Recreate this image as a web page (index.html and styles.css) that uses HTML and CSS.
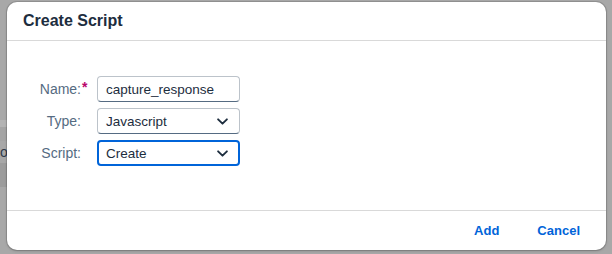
FILE: index.html
```html
<!DOCTYPE html>
<html lang="en">
<head>
    <meta charset="UTF-8">
    <title>Create Script</title>
    <link rel="stylesheet" href="styles.css">
</head>
<body>
    <div class="backdrop">
        <div class="band band-light"></div>
        <div class="band band-mid"></div>
        <div class="band-text">ot</div>
        <div class="band band-dark"></div>
    </div>

    <div class="dialog">
        <div class="dialog-header">Create Script</div>

        <div class="dialog-content">
            <div class="form">
                <label class="form-label">Name:</label>
                <span class="required">*</span>
                <div class="input">capture_response</div>

                <label class="form-label">Type:</label>
                <span></span>
                <div class="input select">
                    <span>Javascript</span>
                    <svg class="chevron" viewBox="0 0 10 6" width="11" height="7"><path d="M1 1l4 4 4-4" fill="none" stroke="#1d2d3e" stroke-width="1.7" stroke-linecap="round" stroke-linejoin="round"/></svg>
                </div>

                <label class="form-label">Script:</label>
                <span></span>
                <div class="input select focused">
                    <span>Create</span>
                    <svg class="chevron" viewBox="0 0 10 6" width="11" height="7"><path d="M1 1l4 4 4-4" fill="none" stroke="#1d2d3e" stroke-width="1.7" stroke-linecap="round" stroke-linejoin="round"/></svg>
                </div>
            </div>
        </div>

        <div class="dialog-footer">
            <button class="btn">Add</button>
            <button class="btn">Cancel</button>
        </div>
    </div>
</body>
</html>
```

FILE: styles.css
```css
body {
    margin: 0;
    width: 612px;
    height: 254px;
    overflow: hidden;
    background-color: #a8a8a8;
    font-family: 'Liberation Sans', Arial, sans-serif;
    position: relative;
}
.backdrop {
    padding-top: 120px;
    width: 20px;
    display: flex;
    flex-direction: column;
}
.band {
    width: 100%;
}
.band-light {
    height: 7px;
    background-color: #b3b3b3;
}
.band-mid {
    height: 14px;
    background-color: #a4a4a4;
}
.band-text {
    height: 22px;
    line-height: 22px;
    font-size: 14px;
    color: #2e3a48;
}
.band-dark {
    height: 24px;
    background-color: #9c9c9c;
}
.dialog {
    position: absolute;
    top: 2px;
    left: 7px;
    width: 599px;
    height: 248px;
    background-color: #fff;
    border-radius: 10px;
    box-shadow: 0 0 0 1px rgba(0,0,0,0.12), 0 1px 3px rgba(0,0,0,0.2);
    display: flex;
    flex-direction: column;
    overflow: hidden;
}
.dialog-header {
    height: 38px;
    line-height: 38px;
    padding-left: 16px;
    font-size: 16px;
    font-weight: bold;
    color: #1d2d3e;
    border-bottom: 1px solid #d9d9d9;
}
.dialog-content {
    flex: 1;
    padding-top: 35px;
    padding-left: 16px;
}
.form {
    display: grid;
    grid-template-columns: 58px 8px 143px;
    grid-auto-rows: 26px;
    row-gap: 6px;
    align-items: center;
}
.form-label {
    text-align: right;
    font-size: 14px;
    color: #556b82;
}
.required {
    font-size: 14px;
    font-weight: bold;
    color: #ba066c;
    align-self: start;
    margin-top: 3px;
    padding-left: 1px;
}
.input {
    height: 26px;
    box-sizing: border-box;
    border: 1px solid #bcc3ca;
    border-bottom-color: #556b82;
    border-radius: 4px;
    padding: 0 8px;
    font-size: 13.5px;
    color: #1d2d3e;
    display: flex;
    align-items: center;
    justify-content: space-between;
    margin-left: 8px;
    width: 143px;
}
.select .chevron {
    margin-right: 3px;
}
.focused {
    border: 2px solid #0064d9;
    padding: 0 7px;
}
.dialog-footer {
    height: 39px;
    border-top: 1px solid #d9d9d9;
    display: flex;
    justify-content: flex-end;
    align-items: center;
    gap: 18px;
    padding-right: 16px;
}
.btn {
    background: none;
    border: none;
    padding: 0 10px;
    font-family: inherit;
    font-size: 13px;
    font-weight: bold;
    color: #0064d9;
}
```
